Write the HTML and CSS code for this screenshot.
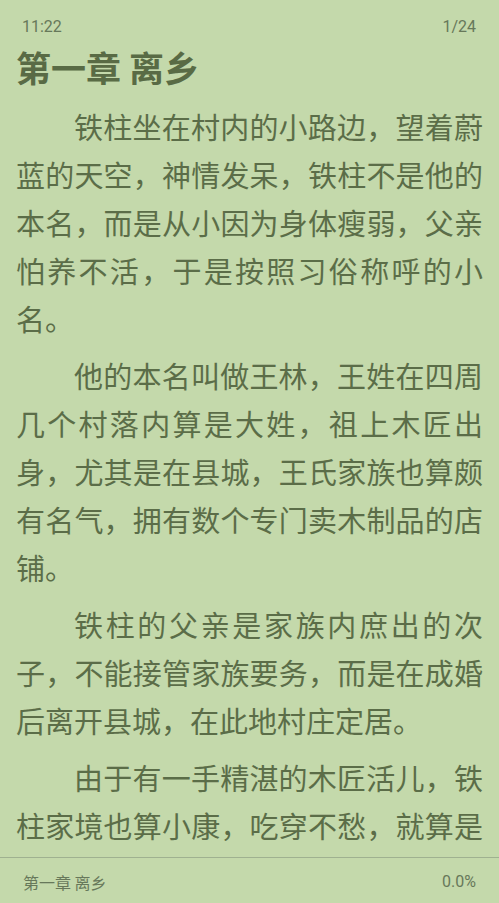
FILE: index.html
```html
<!DOCTYPE html>
<html lang="zh-CN">

<head>
    <meta charset="UTF-8">
    <meta name="viewport" content="width=device-width, initial-scale=1.0">
    <title>第一章 离乡</title>
    <link rel="stylesheet" href="styles.css">
</head>

<body>
    <div class="page">
        <!-- Top info bar -->
        <div class="status">
            <span class="time">11:22</span>
            <span class="pages">1/24</span>
        </div>

        <!-- Chapter text -->
        <div class="chapter">
            <h1 class="chapter-title">第一章 离乡</h1>
            <p>铁柱坐在村内的小路边，望着蔚蓝的天空，神情发呆，铁柱不是他的本名，而是从小因为身体瘦弱，父亲怕养不活，于是按照习俗称呼的小名。</p>
            <p>他的本名叫做王林，王姓在四周几个村落内算是大姓，祖上木匠出身，尤其是在县城，王氏家族也算颇有名气，拥有数个专门卖木制品的店铺。</p>
            <p>铁柱的父亲是家族内庶出的次子，不能接管家族要务，而是在成婚后离开县城，在此地村庄定居。</p>
            <p class="last">由于有一手精湛的木匠活儿，铁柱家境也算小康，吃穿不愁，就算是</p>
        </div>

        <!-- Bottom info bar -->
        <div class="footer">
            <span class="footer-title">第一章 离乡</span>
            <span class="progress">0.0%</span>
        </div>
    </div>
</body>

</html>
```

FILE: styles.css
```css
body {
    margin: 0;
    background-color: #c4d9ab;
    font-family: "Noto Sans CJK SC", "Noto Sans", sans-serif;
    color: #5b6d48;
}

.page {
    height: 903px;
    display: flex;
    flex-direction: column;
    overflow: hidden;
}

.status {
    display: flex;
    justify-content: space-between;
    padding: 17px 23px 0 22px;
    font-family: Roboto, "Noto Sans", sans-serif;
    font-size: 16px;
    line-height: 20px;
    color: #67785a;
}

.chapter {
    flex: 1;
    overflow: hidden;
    padding: 6px 16px 0 16px;
}

.chapter-title {
    margin: 0 0 11px 0;
    font-size: 35px;
    line-height: 48px;
    font-weight: bold;
    color: #596b45;
}

.chapter p {
    margin: 9px 0 0 0;
    font-size: 29px;
    line-height: 48px;
    text-indent: 2em;
    text-align: justify;
}

/* last visible line is cut mid-sentence, keep it spread full width */
.chapter p.last {
    text-align-last: justify;
}

.footer {
    display: flex;
    justify-content: space-between;
    border-top: 1px solid #9fb190;
    height: 46px;
    box-sizing: border-box;
    padding: 14px 23px 0 23px;
    font-size: 16px;
    line-height: 20px;
    color: #67785a;
}

.progress {
    font-family: Roboto, "Noto Sans", sans-serif;
}
```
